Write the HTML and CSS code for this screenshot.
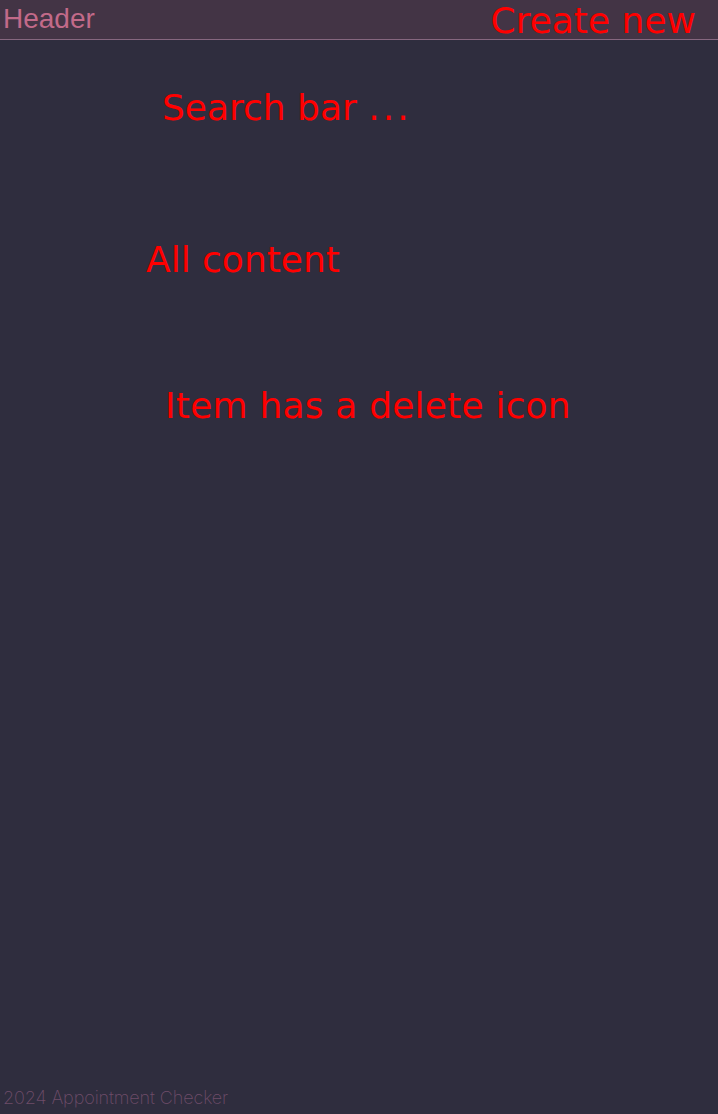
FILE: index.html
```html
<!DOCTYPE html>
<html lang="en">
<head>
<meta charset="utf-8">
<title>Appointment Checker</title>
<link rel="stylesheet" href="styles.css">
</head>
<body>
<div class="page">
  <header class="topbar">
    <div class="brand">Header</div>
    <div class="create">Create new</div>
  </header>
  <main class="content">
    <div class="note note-search">Search bar <span class="dots">...</span></div>
    <div class="note note-all">All content</div>
    <div class="note note-item">Item has a delete icon</div>
  </main>
  <footer class="footer">2024 Appointment Checker</footer>
</div>
</body>
</html>
```
FILE: styles.css
```css
html, body {
  margin: 0;
  padding: 0;
  height: 100%;
}
body {
  background: #2f2d3e;
}
.page {
  min-height: 100vh;
  display: flex;
  flex-direction: column;
}
.topbar {
  height: 39px;
  background: #433445;
  border-bottom: 1px solid #86677f;
  display: flex;
  justify-content: space-between;
  align-items: flex-start;
}
.brand {
  font-family: "Liberation Sans", Arial, sans-serif;
  font-size: 28px;
  line-height: 31px;
  padding: 3px 0 0 3px;
  color: #c26a89;
}
.create {
  font-family: "DejaVu Sans", Verdana, sans-serif;
  font-size: 36px;
  line-height: 42px;
  padding-right: 22px;
  color: #ff0000;
}
.content {
  flex: 1;
  display: flex;
  flex-direction: column;
  align-items: flex-start;
}
.note {
  font-family: "DejaVu Sans", Verdana, sans-serif;
  font-size: 36px;
  line-height: 42px;
  color: #ff0000;
}
.dots {
  letter-spacing: 3px;
}
.note-search {
  margin: 47px 0 0 162px;
}
.note-all {
  margin: 110px 0 0 146px;
}
.note-item {
  margin: 104px 0 0 165px;
  letter-spacing: 0.2px;
}
.footer {
  font-family: Inter, "Liberation Sans", sans-serif;
  font-weight: 200;
  font-size: 18px;
  line-height: 21px;
  letter-spacing: -0.1px;
  padding: 0 0 6px 3px;
  color: #6e4c69;
}
```
